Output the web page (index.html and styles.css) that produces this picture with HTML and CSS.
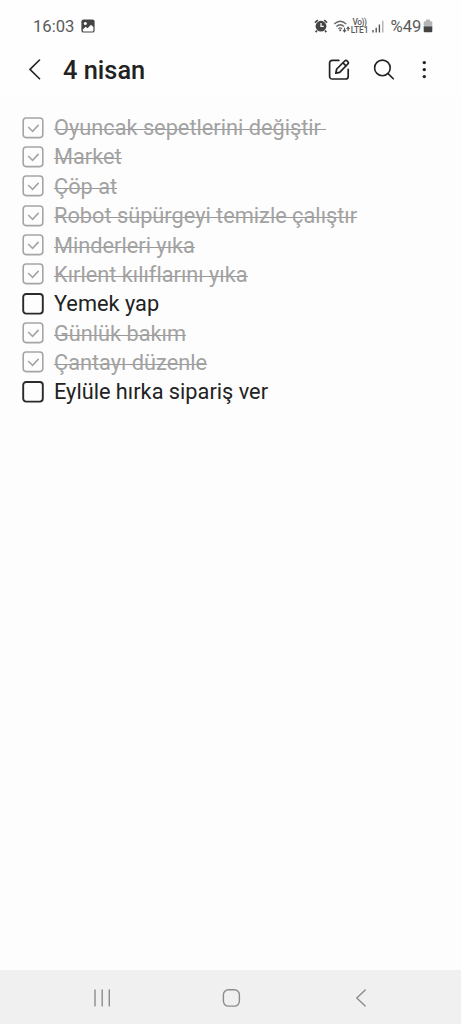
FILE: index.html
```html
<!DOCTYPE html>
<html lang="tr">
<head>
<meta charset="utf-8">
<title>4 nisan</title>
<link rel="stylesheet" href="styles.css">
</head>
<body>
<header class="status">
  <span class="clock">16:03</span>
  <svg class="photo" width="14" height="14" viewBox="0 0 14 14"><rect x=".4" y=".4" width="13.2" height="13.2" rx="2.2" fill="#444"/><circle cx="4.3" cy="4.6" r="1.5" fill="#fff"/><path d="M1.8 10.4 4.6 7.7l1.9 1.5L10 5.8l2.4 2.3v3.3a1 1 0 0 1-1 1H2.8a1 1 0 0 1-1-1z" fill="#fff"/></svg>
  <div class="indicators">
    <svg class="alarm" width="14" height="14" viewBox="0 0 14 14"><circle cx="7" cy="7.2" r="5.4" fill="#444"/><path d="M1 3.6 3.8 1M13 3.6 10.2 1M3 11.5l-1.3 1.6M11 11.5l1.3 1.6" stroke="#444" stroke-width="1.7"/><path d="M7 4v3.4h2.7" fill="none" stroke="#fff" stroke-width="1.2"/></svg>
    <svg class="wifi" width="17" height="14" viewBox="0 0 17 14"><path d="M.2 5Q6.2-.4 12.2 5M2.4 7.5q3.8-3.5 7.6 0M4.4 9.7q1.8-1.6 3.6 0" fill="none" stroke="#666" stroke-width="1.3"/><circle cx="6.2" cy="11.3" r="1" fill="#555"/><path d="M10.5 8.8v3.6M9 11l1.5 1.8L12 11M14.1 12V8.4M12.6 10l1.5-1.8 1.5 1.8" fill="none" stroke="#555" stroke-width="1.1"/></svg>
    <div class="lte"><span class="volte">Vo))</span><span>LTE1</span></div>
    <svg class="signal" width="12" height="13" viewBox="0 0 12 13"><path d="M1 10v2.5M4.2 7.7v4.8M7.4 4.4v8.1" stroke="#555" stroke-width="1.4"/><path d="M10.8.8v11.7" stroke="#aaa" stroke-width="1.3"/></svg>
    <span class="percent">%49</span>
    <svg class="battery" width="10" height="14" viewBox="0 0 10 14"><path d="M3 .5h4v1.7h1.3a1 1 0 0 1 1 1V8H.7V3.2a1 1 0 0 1 1-1H3z" fill="#b5b5b5"/><path d="M.7 7.5h8.6v4.8a1 1 0 0 1-1 1H1.7a1 1 0 0 1-1-1z" fill="#444"/></svg>
  </div>
</header>
<nav class="toolbar">
  <svg class="back" width="14" height="22" viewBox="0 0 14 22"><path d="M11.5 1 2 10.4l9.5 9.4" fill="none" stroke="#222" stroke-width="1.6" stroke-linecap="round" stroke-linejoin="round"/></svg>
  <h1 class="title">4 nisan</h1>
  <div class="actions">
    <svg width="24" height="24" viewBox="0 0 24 24" fill="none" stroke="#222" stroke-width="1.7" stroke-linecap="round" stroke-linejoin="round"><path d="M11.8 2.4H5.2a2.6 2.6 0 0 0-2.6 2.6v13.4A2.6 2.6 0 0 0 5.2 21h13.4a2.6 2.6 0 0 0 2.6-2.6v-7"/><path d="m8.8 15.2.9-4.2 8-8c1.7-1.6 4.7 1.3 3.1 3l-8.1 8.3zM16 4.9l3.1 3.1"/></svg>
    <svg width="24" height="24" viewBox="0 0 24 24" fill="none" stroke="#222" stroke-width="1.6" stroke-linecap="round"><circle cx="10.4" cy="9.9" r="7.8"/><path d="m16.1 15.6 5.2 5.2"/></svg>
    <svg width="24" height="24" viewBox="0 0 24 24" fill="#222"><circle cx="12.3" cy="4.6" r="1.7"/><circle cx="12.3" cy="11.6" r="1.7"/><circle cx="12.3" cy="18.6" r="1.7"/></svg>
  </div>
</nav>
<main class="note">
  <ul class="list">
    <li class="item done"><svg class="box" viewBox="0 0 22 22"><rect x="1.2" y="1" width="19.6" height="19.6" rx="3"/><path d="m6.2 10 4.4 4.3 6-6.4"/></svg><span class="label">Oyuncak sepetlerini değiştir </span></li>
    <li class="item done"><svg class="box" viewBox="0 0 22 22"><rect x="1.2" y="1" width="19.6" height="19.6" rx="3"/><path d="m6.2 10 4.4 4.3 6-6.4"/></svg><span class="label">Market</span></li>
    <li class="item done"><svg class="box" viewBox="0 0 22 22"><rect x="1.2" y="1" width="19.6" height="19.6" rx="3"/><path d="m6.2 10 4.4 4.3 6-6.4"/></svg><span class="label">Çöp at</span></li>
    <li class="item done"><svg class="box" viewBox="0 0 22 22"><rect x="1.2" y="1" width="19.6" height="19.6" rx="3"/><path d="m6.2 10 4.4 4.3 6-6.4"/></svg><span class="label">Robot süpürgeyi temizle çalıştır</span></li>
    <li class="item done"><svg class="box" viewBox="0 0 22 22"><rect x="1.2" y="1" width="19.6" height="19.6" rx="3"/><path d="m6.2 10 4.4 4.3 6-6.4"/></svg><span class="label">Minderleri yıka</span></li>
    <li class="item done"><svg class="box" viewBox="0 0 22 22"><rect x="1.2" y="1" width="19.6" height="19.6" rx="3"/><path d="m6.2 10 4.4 4.3 6-6.4"/></svg><span class="label">Kırlent kılıflarını yıka</span></li>
    <li class="item"><svg class="box" viewBox="0 0 22 22"><rect x="1.2" y="1" width="19.6" height="19.6" rx="3"/></svg><span class="label">Yemek yap</span></li>
    <li class="item done"><svg class="box" viewBox="0 0 22 22"><rect x="1.2" y="1" width="19.6" height="19.6" rx="3"/><path d="m6.2 10 4.4 4.3 6-6.4"/></svg><span class="label">Günlük bakım</span></li>
    <li class="item done"><svg class="box" viewBox="0 0 22 22"><rect x="1.2" y="1" width="19.6" height="19.6" rx="3"/><path d="m6.2 10 4.4 4.3 6-6.4"/></svg><span class="label">Çantayı düzenle</span></li>
    <li class="item"><svg class="box" viewBox="0 0 22 22"><rect x="1.2" y="1" width="19.6" height="19.6" rx="3"/></svg><span class="label">Eylüle hırka sipariş ver</span></li>
  </ul>
</main>
<footer class="navbar">
  <svg width="20" height="20" viewBox="0 0 20 20"><path d="M3 1.9v16M10.2 1.9v16M17.3 1.9v16"/></svg>
  <svg width="20" height="20" viewBox="0 0 20 20"><rect x="1.4" y="1.7" width="16" height="16.4" rx="5"/></svg>
  <svg width="20" height="20" viewBox="0 0 20 20"><path d="m14.2 2-8.4 8 8.4 8"/></svg>
</footer>
</body>
</html>
```
FILE: styles.css
```css
* { box-sizing: border-box; }
body {
  margin: 0;
  height: 1024px;
  display: flex;
  flex-direction: column;
  background: #fdfdfd;
  color: #222;
  font-family: Roboto, "Noto Sans", sans-serif;
  font-variant-ligatures: none;
  overflow: hidden;
}
svg { display: block; flex: none; }
.status {
  height: 42px;
  padding: 10px 28.5px 0 33px;
  display: flex;
  align-items: center;
  background: #fefefe;
  color: #5a5a5a;
}
.clock { font-size: 16.6px; line-height: 20px; width: 48px; padding-top: 1px; white-space: nowrap; }
.indicators { margin-left: auto; display: flex; align-items: center; }
.wifi { margin-left: 6px; }
.lte {
  width: 18px;
  display: flex;
  flex-direction: column;
  align-items: center;
  font-size: 8.4px;
  line-height: 8px;
  font-weight: 500;
  letter-spacing: -0.1px;
  white-space: nowrap;
}
.volte { letter-spacing: -0.5px; }
.signal { margin-left: 3px; }
.percent { font-size: 16.6px; line-height: 20px; margin-left: 7px; padding-top: 1px; width: 32px; white-space: nowrap; }
.toolbar {
  height: 56px;
  padding: 1px 25px 0 28px;
  display: flex;
  align-items: center;
  background: #fefefe;
  border-bottom: 1px solid #fbfbfb;
}
.title { margin: 0 0 0 21px; font-size: 25.4px; line-height: 30px; font-weight: 500; }
.actions { margin-left: auto; display: grid; grid-template-columns: 45px 40px 24px; }
.note { flex: 1; padding: 14.9px 22px; }
.list { margin: 0; padding: 0; list-style: none; }
.item { display: flex; align-items: center; height: 29.37px; font-size: 21.75px; }
.box { width: 22px; height: 22px; margin-right: 10px; fill: none; stroke: #2a2a2a; stroke-width: 1.9; }
.done .box { stroke: #a5a5a5; stroke-width: 1.6; }
.label { line-height: 29px; white-space: pre; }
.done .label {
  color: #a2a2a2;
  background: linear-gradient(#999, #999) 0 16px / 100% 1px no-repeat;
}
.navbar {
  height: 54px;
  padding: 2px 90px 0 92px;
  display: flex;
  align-items: center;
  justify-content: space-between;
  background: #f0f0f0;
}
.navbar svg { fill: none; stroke: #8c8c8c; stroke-width: 1.4; stroke-linecap: round; stroke-linejoin: round; }
```
